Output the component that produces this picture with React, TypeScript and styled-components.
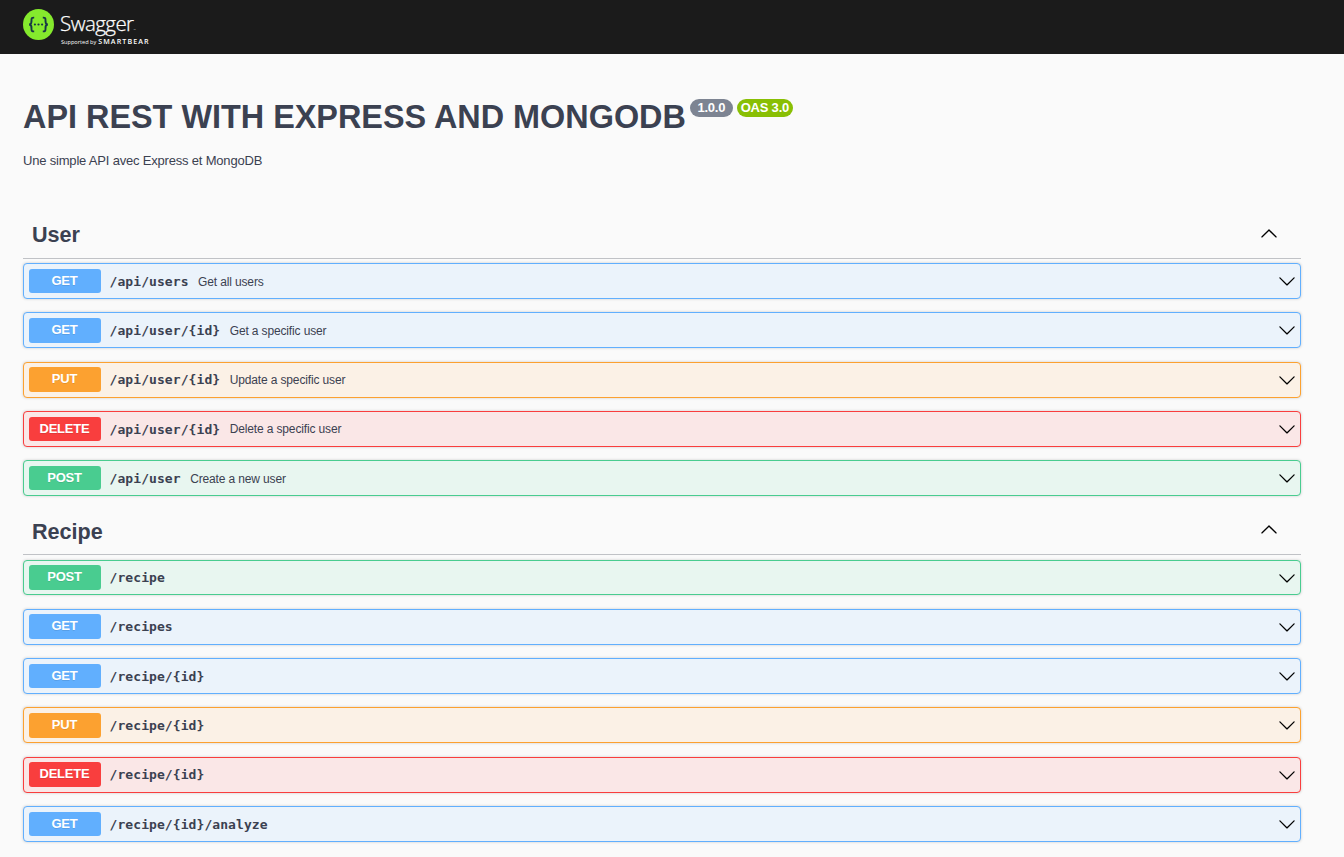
import React from "react";
import styled, { createGlobalStyle } from "styled-components";

type Method = "GET" | "PUT" | "DELETE" | "POST";

interface Operation {
  method: Method;
  path: string;
  summary?: string;
}

interface Tag {
  name: string;
  operations: Operation[];
}

const palette: Record<Method, { main: string; tint: string }> = {
  GET: { main: "#61affe", tint: "#ebf3fb" },
  PUT: { main: "#fca130", tint: "#fbf1e6" },
  DELETE: { main: "#f93e3e", tint: "#fae7e7" },
  POST: { main: "#49cc90", tint: "#e8f6f0" },
};

const tags: Tag[] = [
  {
    name: "User",
    operations: [
      { method: "GET", path: "/api/users", summary: "Get all users" },
      { method: "GET", path: "/api/user/{id}", summary: "Get a specific user" },
      { method: "PUT", path: "/api/user/{id}", summary: "Update a specific user" },
      { method: "DELETE", path: "/api/user/{id}", summary: "Delete a specific user" },
      { method: "POST", path: "/api/user", summary: "Create a new user" },
    ],
  },
  {
    name: "Recipe",
    operations: [
      { method: "POST", path: "/recipe" },
      { method: "GET", path: "/recipes" },
      { method: "GET", path: "/recipe/{id}" },
      { method: "PUT", path: "/recipe/{id}" },
      { method: "DELETE", path: "/recipe/{id}" },
      { method: "GET", path: "/recipe/{id}/analyze" },
    ],
  },
];

const GlobalStyle = createGlobalStyle`
  *, *::before, *::after { box-sizing: border-box; }
  body {
    margin: 0;
    background: #fafafa;
    color: #3b4151;
    font-family: "Liberation Sans", Arial, sans-serif;
  }
`;

const Page = styled.div`
  height: 857px;
  overflow: hidden;
`;

const Topbar = styled.header`
  height: 54px;
  padding: 9px 23px 0;
  background: #1b1b1b;
  display: flex;
  align-items: flex-start;
  gap: 6px;
  color: #fff;
  font-family: "Open Sans", sans-serif;
`;

const Wordmark = styled.div`
  display: flex;
  flex-direction: column;
  padding-top: 1px;
`;

const BrandName = styled.div`
  display: flex;
  align-items: flex-end;
  height: 27px;
  font-size: 20.5px;
  font-weight: 300;
  line-height: 27px;
  letter-spacing: -0.55px;
  -webkit-text-stroke: 0.25px #fff;
`;

const Trademark = styled.span`
  font-size: 3px;
  line-height: 13px;
  letter-spacing: 0;
  -webkit-text-stroke: 0;
`;

const Byline = styled.div`
  display: flex;
  align-items: baseline;
  gap: 2px;
  padding-left: 1px;
  font-size: 5.6px;
  line-height: 9px;
  white-space: nowrap;
`;

const Company = styled.span`
  font-size: 7.1px;
  font-weight: 600;
  letter-spacing: 1.1px;
`;

const Content = styled.main`
  width: 1278px;
  margin-left: 23px;
`;

const Info = styled.section`
  height: 157px;
  padding-top: 44px;
`;

const TitleRow = styled.div`
  display: flex;
  align-items: flex-start;
  height: 37px;
`;

const Title = styled.h1`
  margin: 0;
  font-size: 32.4px;
  line-height: 39px;
  font-weight: 700;
  white-space: nowrap;
`;

const Badge = styled.span<{ $color: string; $width: number }>`
  width: ${(p) => p.$width}px;
  height: 18px;
  margin: 1px 0 0 4px;
  border-radius: 9px;
  background: ${(p) => p.$color};
  color: #fff;
  font-size: 13px;
  font-weight: 700;
  letter-spacing: -0.2px;
  line-height: 18px;
  text-align: center;
  white-space: nowrap;
`;

const Description = styled.p`
  margin: 18px 0 0;
  font-size: 13px;
  letter-spacing: -0.19px;
  line-height: 15px;
`;

const TagSection = styled.section`
  height: 296.5px;
`;

const TagHeader = styled.div`
  display: flex;
  align-items: center;
  justify-content: space-between;
  height: 47.8px;
  padding: 0 23px 0 9px;
  border-bottom: 1px solid rgba(59, 65, 81, 0.3);

  svg {
    margin-bottom: 3px;
  }
`;

const TagName = styled.h3`
  margin: 0;
  font-size: 21.6px;
  line-height: 26px;
  padding-top: 1.4px;
`;

const Operations = styled.div`
  display: flex;
  flex-direction: column;
  gap: 13.45px;
  padding-top: 4.3px;
`;

const OperationRow = styled.div<{ $method: Method }>`
  display: flex;
  align-items: center;
  height: 35.85px;
  padding: 0 4px 0 5px;
  border: 1px solid ${(p) => palette[p.$method].main};
  border-radius: 4px;
  background: ${(p) => palette[p.$method].tint};
  box-shadow: 0 0 3px rgba(0, 0, 0, 0.19);
`;

const MethodLabel = styled.span<{ $method: Method }>`
  flex: none;
  width: 72px;
  height: 24.7px;
  padding-right: 1px;
  border-radius: 3px;
  background: ${(p) => palette[p.$method].main};
  color: #fff;
  font-size: 13px;
  font-weight: 700;
  letter-spacing: -0.2px;
  line-height: 24.3px;
  text-align: center;
  text-shadow: 0 1px 0 rgba(0, 0, 0, 0.1);
`;

const Path = styled.span`
  margin-left: 8.5px;
  padding-top: 0.4px;
  font-family: "DejaVu Sans Mono", monospace;
  font-size: 13px;
  font-weight: 700;
  letter-spacing: 0.08px;
`;

const Summary = styled.span`
  flex: 1;
  margin-left: 9.5px;
  padding-top: 1px;
  font-size: 12px;
  letter-spacing: -0.14px;
`;

const ArrowIcon = styled.svg`
  flex: none;
  display: block;
  width: 18px;
  height: 18px;
`;

const Arrow = ({ up = false }: { up?: boolean }) => (
  <ArrowIcon viewBox="0 0 20 20" aria-hidden="true">
    <path
      d={
        up
          ? "M17.418 14.908c.272.268.709.268.979 0s.271-.701 0-.969l-7.908-7.83c-.27-.268-.707-.268-.979 0l-7.908 7.83c-.27.268-.27.701 0 .969.271.268.709.268.979 0L10 7.767z"
          : "M17.418 6.109c.272-.268.709-.268.979 0s.271.701 0 .969l-7.908 7.83c-.27.268-.707.268-.979 0l-7.908-7.83c-.27-.268-.27-.701 0-.969.271-.268.709-.268.979 0L10 13.25z"
      }
    />
  </ArrowIcon>
);

const LogoMark = () => (
  <svg width="31" height="31" viewBox="0 0 31 31" aria-hidden="true">
    <circle cx="15.5" cy="15.5" r="15.5" fill="#85ea2d" />
    <g fill="none" stroke="#173647" strokeWidth="1.9">
      <path d="M11.2 8.6C8.7 8.5 8.4 9.4 8.5 11.4C8.7 14 8.2 15.3 6.2 15.5C8.2 15.7 8.7 17 8.5 19.6C8.4 21.6 8.7 22.5 11.2 22.4" />
      <path d="M19.8 8.6C22.3 8.5 22.6 9.4 22.5 11.4C22.3 14 22.8 15.3 24.8 15.5C22.8 15.7 22.3 17 22.5 19.6C22.6 21.6 22.3 22.5 19.8 22.4" />
    </g>
    <g fill="#173647">
      <circle cx="11.9" cy="15.5" r="1.1" />
      <circle cx="15.5" cy="15.5" r="1.1" />
      <circle cx="19.1" cy="15.5" r="1.1" />
    </g>
  </svg>
);

export default function App() {
  return (
    <Page>
      <GlobalStyle />
      <Topbar>
        <LogoMark />
        <Wordmark>
          <BrandName>
            Swagger<Trademark>™</Trademark>
          </BrandName>
          <Byline>
            Supported by <Company>SMARTBEAR</Company>
          </Byline>
        </Wordmark>
      </Topbar>
      <Content>
        <Info>
          <TitleRow>
            <Title>API REST WITH EXPRESS AND MONGODB</Title>
            <Badge $color="#7d8492" $width={43}>1.0.0</Badge>
            <Badge $color="#89bf04" $width={56}>OAS 3.0</Badge>
          </TitleRow>
          <Description>Une simple API avec Express et MongoDB</Description>
        </Info>
        {tags.map((tag) => (
          <TagSection key={tag.name}>
            <TagHeader>
              <TagName>{tag.name}</TagName>
              <Arrow up />
            </TagHeader>
            <Operations>
              {tag.operations.map((op) => (
                <OperationRow key={op.method + op.path} $method={op.method}>
                  <MethodLabel $method={op.method}>{op.method}</MethodLabel>
                  <Path>{op.path}</Path>
                  <Summary>{op.summary}</Summary>
                  <Arrow />
                </OperationRow>
              ))}
            </Operations>
          </TagSection>
        ))}
      </Content>
    </Page>
  );
}
